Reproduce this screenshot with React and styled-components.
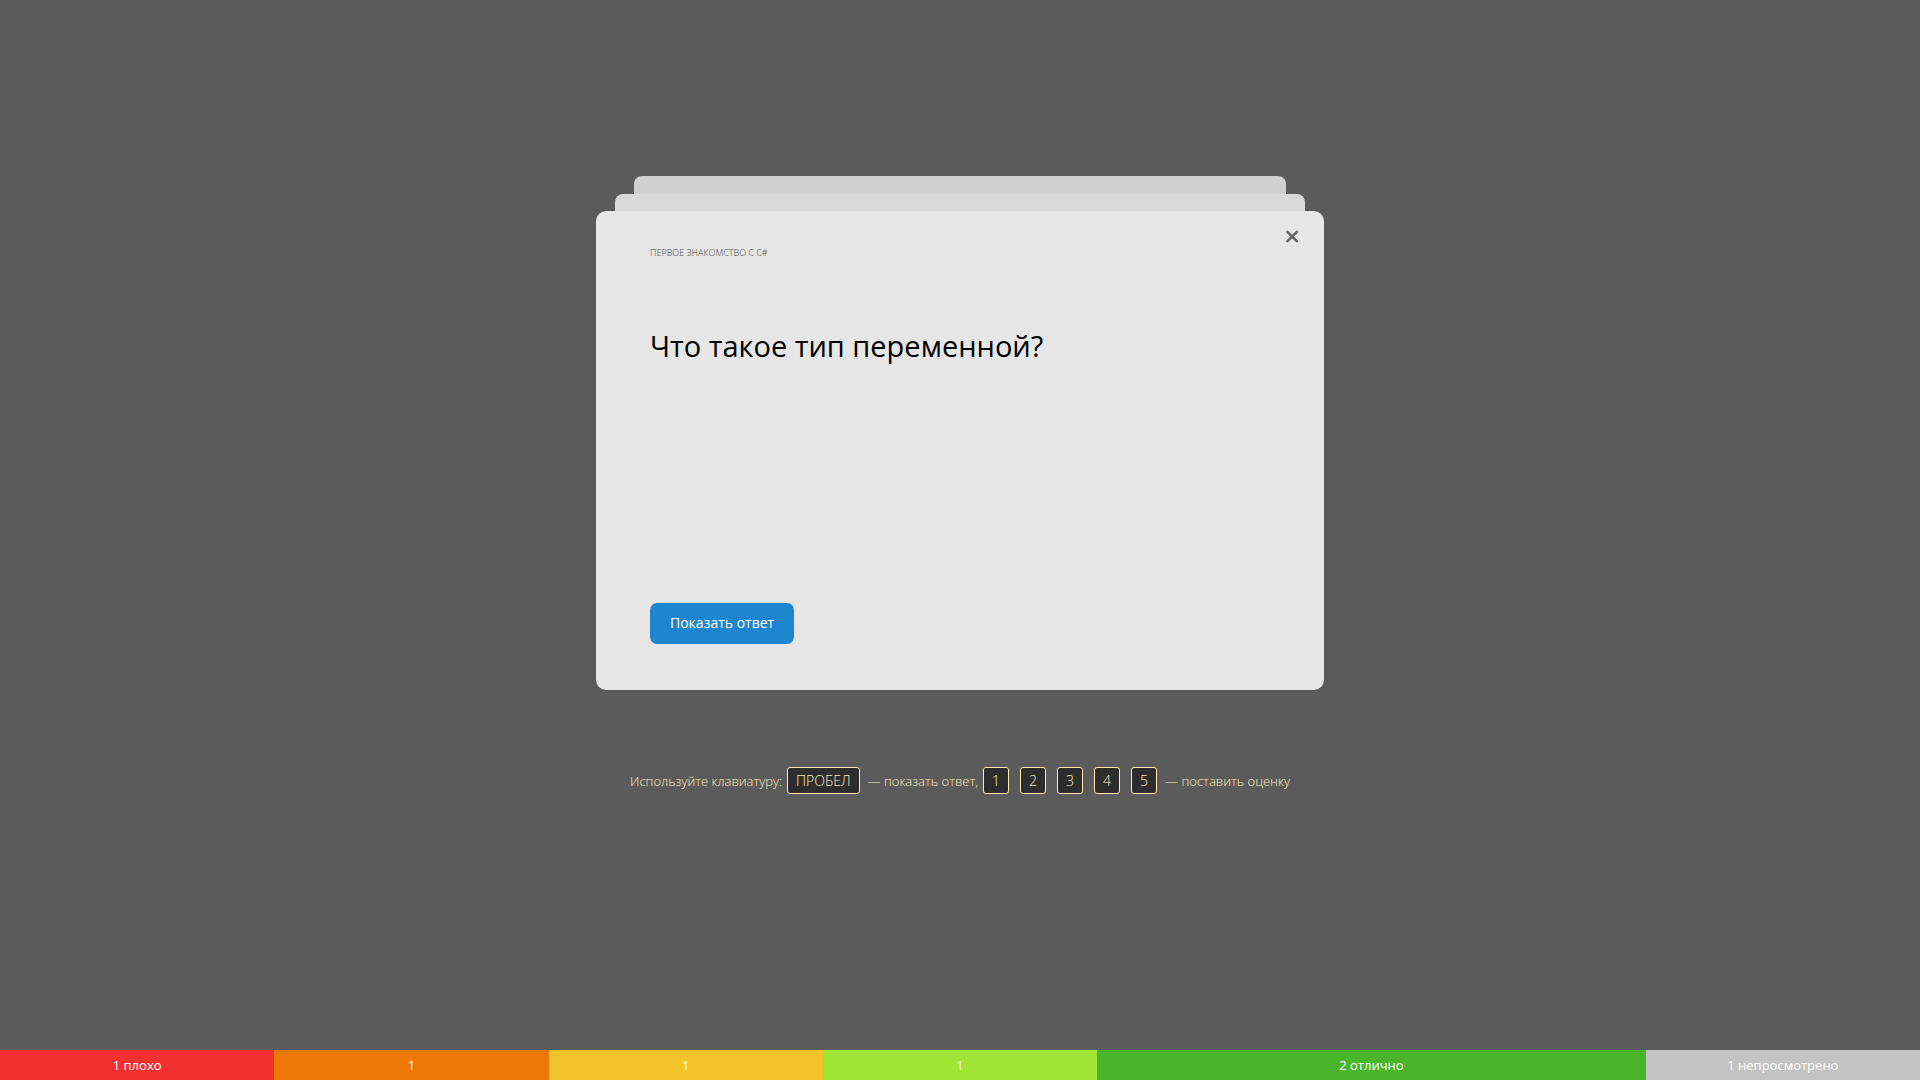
import React from "react";
import styled, { createGlobalStyle } from "styled-components";

const GlobalStyle = createGlobalStyle`
  * { box-sizing: border-box; }
  body {
    margin: 0;
    background: #5b5b5b;
    font-family: "Open Sans", "Noto Sans", sans-serif;
  }
`;

const Page = styled.div`
  display: flex;
  flex-direction: column;
  min-height: 100vh;
`;

const Main = styled.main`
  flex: 1;
  display: flex;
  flex-direction: column;
  align-items: center;
  padding-top: 176px;
`;

const Deck = styled.div`
  display: flex;
  flex-direction: column;
  align-items: center;
  width: 100%;
  max-width: 728px;
`;

const BackCard = styled.div`
  width: calc(100% - ${(p) => p.$inset * 2}px);
  height: ${(p) => p.$height}px;
  border-radius: 8px 8px 0 0;
  background: ${(p) => p.$color};
`;

const Card = styled.article`
  display: flex;
  flex-direction: column;
  align-items: flex-start;
  width: 100%;
  min-height: 479px;
  padding: 14px 20px 46px 54px;
  border-radius: 10px;
  background: #e6e6e6;
`;

const CardHeader = styled.header`
  display: flex;
  justify-content: space-between;
  align-items: flex-start;
  width: 100%;
`;

const Topic = styled.span`
  padding-top: 21px;
  font-size: 9px;
  line-height: 14px;
  font-weight: 300;
  color: #444;
  text-transform: uppercase;
`;

const CloseButton = styled.button`
  display: flex;
  padding: 4px;
  border: 0;
  background: none;
  color: #636363;
  cursor: pointer;
`;

const Question = styled.h1`
  flex: 1;
  margin: 64px 0 0;
  font-size: 29px;
  line-height: 44px;
  font-weight: 400;
  color: #000;
`;

const ShowButton = styled.button`
  height: 41px;
  padding: 0 20px 2px;
  border: 0;
  border-radius: 7px;
  background: #1e85d0;
  color: #fff;
  font-family: inherit;
  font-size: 14px;
  line-height: 20px;
  cursor: pointer;
`;

const Hint = styled.p`
  display: flex;
  align-items: center;
  margin: 77px 0 0;
  font-size: 13px;
  line-height: 20px;
  font-weight: 300;
  color: #fff0bf;
`;

const Keys = styled.span`
  display: flex;
  gap: 11px;
  margin: 0 8px 0 5px;
`;

const Key = styled.kbd`
  padding: 3px 8px;
  border: 1px solid #ffe9b0;
  border-radius: 3px;
  background: #2d2d2d;
  font-family: inherit;
  font-size: 14px;
  line-height: 19px;
`;

const Scores = styled.footer`
  display: flex;
`;

const Score = styled.div`
  flex: ${(p) => p.$count} 1 0;
  background: ${(p) => p.$color};
  color: #fff;
  font-size: 13px;
  line-height: 30px;
  text-align: center;
`;

const scores = [
  { count: 1, label: "плохо", color: "#f23030" },
  { count: 1, label: "", color: "#ed7709" },
  { count: 1, label: "", color: "#f2c42a" },
  { count: 1, label: "", color: "#a0e436" },
  { count: 2, label: "отлично", color: "#4ab52a" },
  { count: 1, label: "непросмотрено", color: "#c3c3c3" },
];

export default function App() {
  return (
    <Page>
      <GlobalStyle />
      <Main>
        <Deck>
          <BackCard $inset={38} $height={18} $color="#d0d0d0" />
          <BackCard $inset={19} $height={17} $color="#d9d9d9" />
          <Card>
            <CardHeader>
              <Topic>Первое знакомство с C#</Topic>
              <CloseButton type="button" aria-label="Закрыть">
                <svg width="16" height="16" viewBox="0 0 16 16" fill="none" stroke="currentColor" strokeWidth="2.6" strokeLinecap="round">
                  <path d="M3.4 2.8L12.8 12.2M12.8 2.8L3.4 12.2" />
                </svg>
              </CloseButton>
            </CardHeader>
            <Question>Что такое тип переменной?</Question>
            <ShowButton type="button">Показать ответ</ShowButton>
          </Card>
        </Deck>
        <Hint>
          Используйте клавиатуру:
          <Keys>
            <Key>ПРОБЕЛ</Key>
          </Keys>
          — показать ответ,
          <Keys>
            {[1, 2, 3, 4, 5].map((n) => (
              <Key key={n}>{n}</Key>
            ))}
          </Keys>
          — поставить оценку
        </Hint>
      </Main>
      <Scores>
        {scores.map((s) => (
          <Score key={s.color} $count={s.count} $color={s.color}>
            {s.label ? `${s.count} ${s.label}` : s.count}
          </Score>
        ))}
      </Scores>
    </Page>
  );
}
